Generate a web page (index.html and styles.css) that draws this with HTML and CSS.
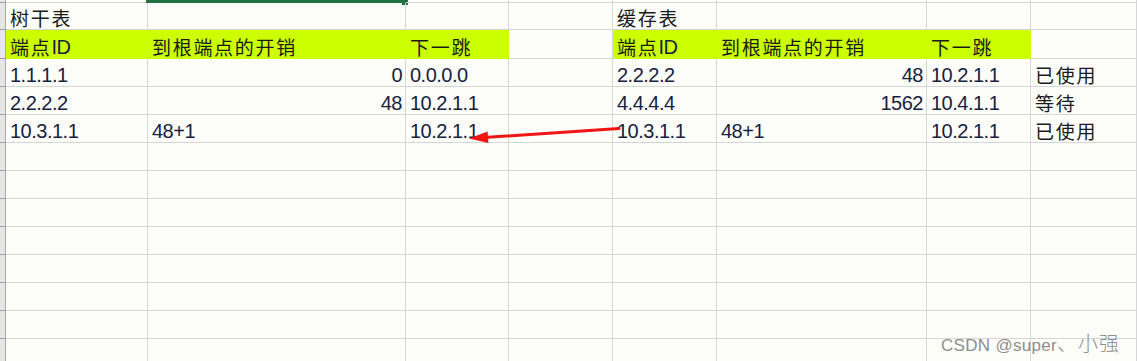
FILE: index.html
```html
<!DOCTYPE html>
<html lang="zh">
<head>
<meta charset="utf-8">
<title>树干表 / 缓存表</title>
<link rel="stylesheet" href="styles.css">
</head>
<body>
<div class="sheet">
  <div class="row r0">
    <div class="c strip"></div><div class="c"></div><div class="c sel"></div><div class="c"></div><div class="c"></div><div class="c"></div><div class="c"></div><div class="c"></div><div class="c"></div>
  </div>
  <div class="row r1">
    <div class="c strip"></div><div class="c"><span class="zh">树干表</span></div><div class="c"></div><div class="c"></div><div class="c"></div><div class="c"><span class="zh">缓存表</span></div><div class="c"></div><div class="c"></div><div class="c"></div>
  </div>
  <div class="row head">
    <div class="c strip"></div><div class="c hd"><span class="zh">端点</span>ID</div><div class="c hd"><span class="zh">到根端点的开销</span></div><div class="c hd"><span class="zh">下一跳</span></div><div class="c"></div><div class="c hd"><span class="zh">端点</span>ID</div><div class="c hd"><span class="zh">到根端点的开销</span></div><div class="c hd"><span class="zh">下一跳</span></div><div class="c"></div>
  </div>
  <div class="row">
    <div class="c strip"></div><div class="c">1.1.1.1</div><div class="c num">0</div><div class="c">0.0.0.0</div><div class="c"></div><div class="c">2.2.2.2</div><div class="c num">48</div><div class="c">10.2.1.1</div><div class="c"><span class="zh">已使用</span></div>
  </div>
  <div class="row">
    <div class="c strip"></div><div class="c">2.2.2.2</div><div class="c num">48</div><div class="c">10.2.1.1</div><div class="c"></div><div class="c">4.4.4.4</div><div class="c num">1562</div><div class="c">10.4.1.1</div><div class="c"><span class="zh">等待</span></div>
  </div>
  <div class="row">
    <div class="c strip"></div><div class="c">10.3.1.1</div><div class="c">48+1</div><div class="c">10.2.1.1</div><div class="c"></div><div class="c">10.3.1.1</div><div class="c">48+1</div><div class="c">10.2.1.1</div><div class="c"><span class="zh">已使用</span></div>
  </div>
  <div class="row"><div class="c strip"></div><div class="c"></div><div class="c"></div><div class="c"></div><div class="c"></div><div class="c"></div><div class="c"></div><div class="c"></div><div class="c"></div></div>
  <div class="row"><div class="c strip"></div><div class="c"></div><div class="c"></div><div class="c"></div><div class="c"></div><div class="c"></div><div class="c"></div><div class="c"></div><div class="c"></div></div>
  <div class="row"><div class="c strip"></div><div class="c"></div><div class="c"></div><div class="c"></div><div class="c"></div><div class="c"></div><div class="c"></div><div class="c"></div><div class="c"></div></div>
  <div class="row"><div class="c strip"></div><div class="c"></div><div class="c"></div><div class="c"></div><div class="c"></div><div class="c"></div><div class="c"></div><div class="c"></div><div class="c"></div></div>
  <div class="row"><div class="c strip"></div><div class="c"></div><div class="c"></div><div class="c"></div><div class="c"></div><div class="c"></div><div class="c"></div><div class="c"></div><div class="c"></div></div>
  <div class="row"><div class="c strip"></div><div class="c"></div><div class="c"></div><div class="c"></div><div class="c"></div><div class="c"></div><div class="c"></div><div class="c"></div><div class="c"></div></div>
  <div class="row"><div class="c strip"></div><div class="c"></div><div class="c"></div><div class="c"></div><div class="c"></div><div class="c"></div><div class="c"></div><div class="c"></div><div class="c"></div></div>
  <div class="row"><div class="c strip"></div><div class="c"></div><div class="c"></div><div class="c"></div><div class="c"></div><div class="c"></div><div class="c"></div><div class="c"></div><div class="c"></div></div>
</div>

<svg class="arrow" width="1137" height="361" viewBox="0 0 1137 361">
  <line x1="619" y1="128.5" x2="484" y2="137.5" stroke="#f01414" stroke-width="3" stroke-linecap="round"/>
  <polygon points="469,138.6 487.6,131.6 488.4,143" fill="#f01414"/>
</svg>

<div class="watermark">CSDN @super<span class="wzh">、小强</span></div>
</body>
</html>
```

FILE: styles.css
```css
html, body {
  margin: 0;
  padding: 0;
}

body {
  width: 1137px;
  height: 361px;
  overflow: hidden;
  position: relative;
  background: #fdfdf9;
  font-family: "Liberation Sans", "Noto Sans CJK SC", sans-serif;
  font-size: 20px;
  color: #172240;
}

.sheet {
  display: flex;
  flex-direction: column;
}

.row {
  display: grid;
  grid-template-columns: 6px 142px 258px 103px 104px 104px 210px 104px 106px;
  height: 28px;
  flex: none;
}

.row.r0 { height: 3px; }
.row.r1 { height: 27px; }
.row.head { height: 29px; }

.c {
  box-sizing: border-box;
  border-right: 1px solid #d5d5d5;
  border-bottom: 1px solid #d5d5d5;
  padding: 0 4px;
  display: flex;
  align-items: flex-end;
  line-height: 22px;
  white-space: nowrap;
  letter-spacing: -0.5px;
  position: relative;
}

.strip {
  padding: 0;
  background: #e6e6e6;
  border-right: 1px solid #a8a8a8;
  border-bottom: 1px solid #9e9e9e;
}

.hd {
  background: #ccff00;
  border-color: #ccff00;
}

.num {
  justify-content: flex-end;
  padding-right: 3px;
}

.zh {
  font-family: "Noto Sans CJK SC", sans-serif;
  font-size: 19px;
  letter-spacing: 1.7px;
  color: #1a1a1a;
}

.sel::before {
  content: "";
  position: absolute;
  left: -2px;
  right: 0;
  top: -3px;
  bottom: -1px;
  border-left: 2px solid #217346;
  border-bottom: 3px solid #217346;
}

.sel::after {
  content: "";
  position: absolute;
  right: -3px;
  top: 0;
  width: 6px;
  height: 5px;
  background: #217346;
}

.arrow {
  position: absolute;
  left: 0;
  top: 0;
  pointer-events: none;
}

.watermark {
  position: absolute;
  left: 941px;
  top: 328px;
  font-family: "Liberation Sans", "Noto Sans CJK SC", sans-serif;
  font-size: 17px;
  color: #8e8e8e;
  white-space: nowrap;
  letter-spacing: 0.3px;
}

.wzh {
  font-family: "Noto Sans CJK SC", sans-serif;
  font-size: 20px;
  font-weight: 300;
  letter-spacing: 1px;
}
```
